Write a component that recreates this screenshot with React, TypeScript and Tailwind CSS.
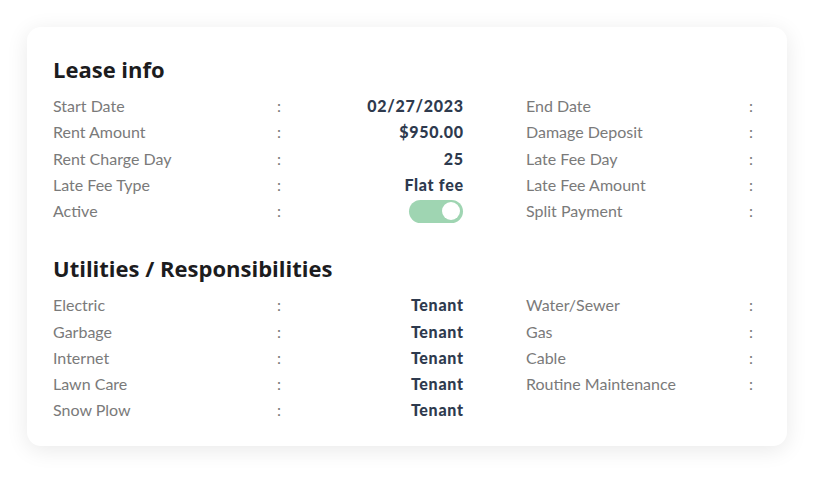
import React from "react";

type Row = { label: string; value?: React.ReactNode; right?: string };

const Toggle = () => (
  <div className="ml-auto mr-[0.7px] flex h-[23px] w-[54px] items-center justify-end rounded-full bg-[#9fd5b2] pr-[3px]">
    <div className="h-[18px] w-[18px] rounded-full bg-white" />
  </div>
);

const lease: Row[] = [
  { label: "Start Date", value: "02/27/2023", right: "End Date" },
  { label: "Rent Amount", value: "$950.00", right: "Damage Deposit" },
  { label: "Rent Charge Day", value: "25", right: "Late Fee Day" },
  { label: "Late Fee Type", value: "Flat fee", right: "Late Fee Amount" },
  { label: "Active", value: <Toggle />, right: "Split Payment" },
];

const utilities: Row[] = [
  { label: "Electric", value: "Tenant", right: "Water/Sewer" },
  { label: "Garbage", value: "Tenant", right: "Gas" },
  { label: "Internet", value: "Tenant", right: "Cable" },
  { label: "Lawn Care", value: "Tenant", right: "Routine Maintenance" },
  { label: "Snow Plow", value: "Tenant" },
];

function Rows({ rows }: { rows: Row[] }) {
  return (
    <div className="flex flex-col">
      {rows.map((r, i) => (
        <div key={i} className="flex h-[26.25px] items-center text-[16px] leading-[26.25px]">
          <div className="flex w-[410px] items-center">
            <div className="w-[224px] text-[#7a7a7a]">{r.label}</div>
            <div className="text-[#7a7a7a]">:</div>
            <div className="-mr-[0.7px] flex flex-1 justify-end text-right font-black tracking-[0.7px] text-[#2e3a4e]">
              {r.value}
            </div>
          </div>
          {r.right ? (
            <div className="ml-[63px] flex items-center">
              <div className="w-[223px] text-[#7a7a7a]">{r.right}</div>
              <div className="text-[#7a7a7a]">:</div>
            </div>
          ) : null}
        </div>
      ))}
    </div>
  );
}

const headingFont = { fontFamily: "'Open Sans', Lato, sans-serif" };

export default function App() {
  return (
    <div
      className="h-[480px] w-[820px] bg-white p-[27px]"
      style={{ fontFamily: "Lato, 'Open Sans', sans-serif" }}
    >
      <div className="h-[419px] w-[760px] rounded-[14px] bg-white px-[26px] pt-[28px] shadow-[0_4px_22px_rgba(0,0,0,0.09)]">
        <h2 className="mb-[10px] text-[22px] font-bold leading-[28px] text-[#1c1c1e]" style={headingFont}>
          Lease info
        </h2>
        <Rows rows={lease} />
        <h2
          className="mb-[10px] mt-[30px] text-[22px] font-bold leading-[28px] text-[#1c1c1e]"
          style={headingFont}
        >
          Utilities / Responsibilities
        </h2>
        <Rows rows={utilities} />
      </div>
    </div>
  );
}
